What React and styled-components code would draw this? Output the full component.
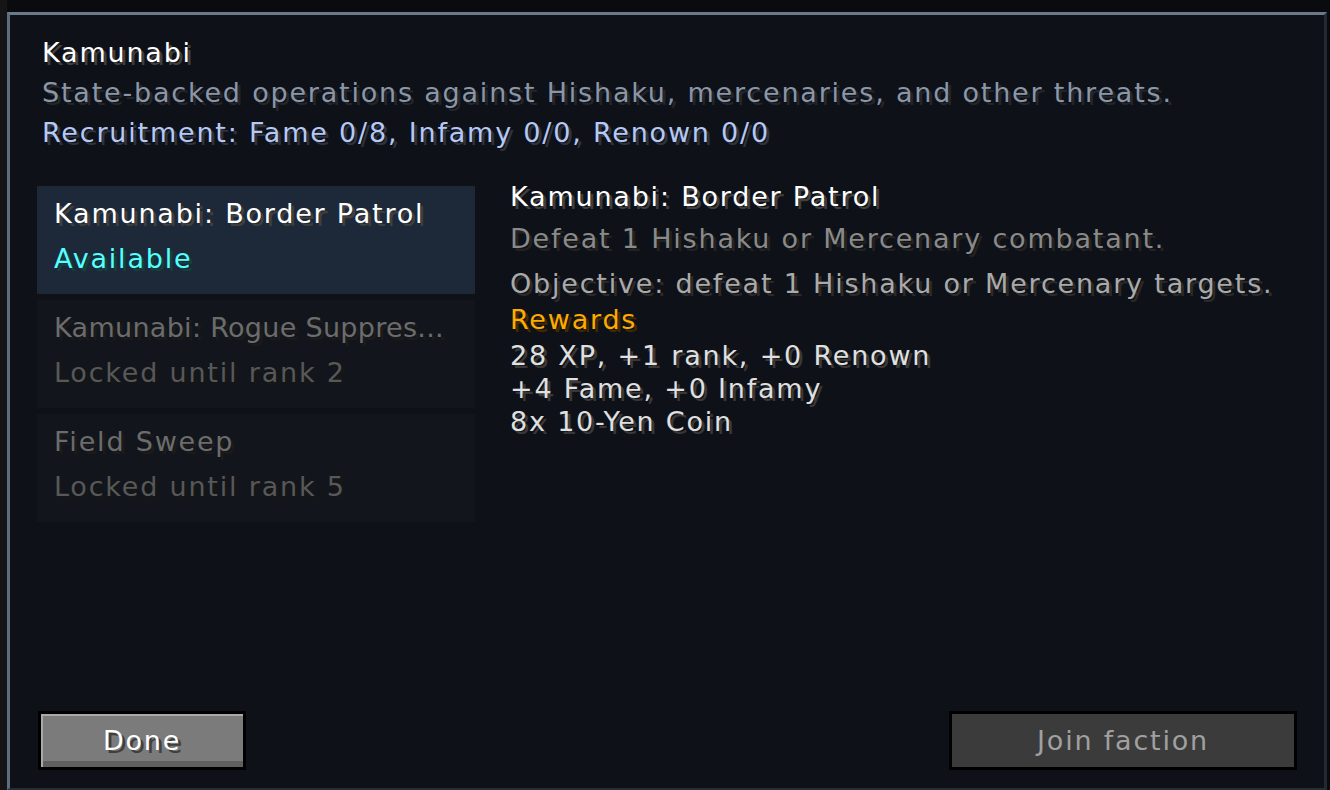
import React from 'react';
import styled, { createGlobalStyle } from 'styled-components';

const GlobalStyle = createGlobalStyle`
  html, body {
    margin: 0;
    background: #0b0c0f;
  }
  body {
    font-family: "DejaVu Sans", "Noto Sans", sans-serif;
  }
`;

// minecraft-style text: flat colour with a hard drop shadow
const Text = styled.div`
  font-size: 27px;
  line-height: 22px;
  letter-spacing: ${(p) => (p.$squeeze ? 0.3 : 1.8)}px;
  white-space: nowrap;
  color: ${(p) => p.$color || '#ffffff'};
  text-shadow: 3px 3px 0 ${(p) => p.$shadow || '#3f3f3f'};
  margin-top: ${(p) => p.$top || 0}px;
`;

const Screen = styled.div`
  width: 1330px;
  height: 790px;
  box-sizing: border-box;
  padding: 12px 3px 0 7px;
  overflow: hidden;
  background: linear-gradient(90deg, #151515 0, #151515 7px, #0a0b0e 7px);
`;

const Panel = styled.section`
  height: 100%;
  box-sizing: border-box;
  display: flex;
  flex-direction: column;
  background: #0e1117;
  border-top: 3px solid #6b7a8b;
  border-left: 3px solid #5d6d7e;
  border-right: 3px solid #222932;
  border-bottom: 2px solid #262d36;
`;

const Header = styled.header`
  padding: 27px 0 0 32px;
  display: flex;
  flex-direction: column;
  gap: 18px;
`;

const Body = styled.div`
  display: flex;
  align-items: flex-start;
  margin-top: 42px;
  padding-left: 27px;
`;

const QuestList = styled.div`
  width: 438px;
  display: flex;
  flex-direction: column;
  gap: 6px;
`;

const QuestItem = styled.div`
  height: 108px;
  box-sizing: border-box;
  padding: 17px 0 0 17px;
  background: ${(p) => (p.$selected ? '#1d2938' : '#12161c')};
  overflow: hidden;
`;

const Detail = styled.div`
  margin-left: 35px;
  display: flex;
  flex-direction: column;
`;

const Footer = styled.footer`
  margin-top: auto;
  display: flex;
  justify-content: space-between;
  align-items: flex-end;
  padding: 0 27px 18px 28px;
`;

const Button = styled.button`
  width: ${(p) => p.$width}px;
  height: 59px;
  box-sizing: border-box;
  border: 3px solid #000;
  padding: 0;
  font-family: "DejaVu Sans", "Noto Sans", sans-serif;
  font-size: 27px;
  letter-spacing: 1.8px;
  cursor: pointer;
  background: ${(p) => (p.disabled ? '#3b3b3b' : '#7b7b7b')};
  color: ${(p) => (p.disabled ? '#a0a0a0' : '#ffffff')};
  text-shadow: ${(p) => (p.disabled ? 'none' : '3px 3px 0 #3f3f3f')};
  box-shadow: ${(p) =>
    p.disabled
      ? 'none'
      : 'inset 2px 2px 0 #a9a9a9, inset 0 -6px 0 #5f5f5f'};
`;

const quests = [
  { title: 'Kamunabi: Border Patrol', status: 'Available', open: true },
  { title: 'Kamunabi: Rogue Suppres...', status: 'Locked until rank 2', long: true },
  { title: 'Field Sweep', status: 'Locked until rank 5' },
];

export default function App() {
  return (
    <>
      <GlobalStyle />
      <Screen>
        <Panel>
          <Header>
            <Text>Kamunabi</Text>
            <Text $color="#8b96a7" $shadow="#22262c">
              State-backed operations against Hishaku, mercenaries, and other threats.
            </Text>
            <Text $color="#b6c9f5" $shadow="#2d323d">
              Recruitment: Fame 0/8, Infamy 0/0, Renown 0/0
            </Text>
          </Header>

          <Body>
            <QuestList>
              {quests.map((q) => (
                <QuestItem key={q.title} $selected={q.open}>
                  <Text
                    $squeeze={q.long}
                    $color={q.open ? '#ffffff' : '#6c6c6c'}
                    $shadow={q.open ? '#3f3f3f' : '#1b1b1b'}
                  >
                    {q.title}
                  </Text>
                  <Text
                    $top={23}
                    $color={q.open ? '#55ffff' : '#585858'}
                    $shadow={q.open ? '#153f3f' : '#161616'}
                  >
                    {q.status}
                  </Text>
                </QuestItem>
              ))}
            </QuestList>

            <Detail>
              <Text>Kamunabi: Border Patrol</Text>
              <Text $top={20} $color="#8a8a8a" $shadow="#222222">
                Defeat 1 Hishaku or Mercenary combatant.
              </Text>
              <Text $top={23} $color="#aaaaaa" $shadow="#2a2a2a">
                Objective: defeat 1 Hishaku or Mercenary targets.
              </Text>
              <Text $top={14} $color="#ffaa00" $shadow="#3f2a00">
                Rewards
              </Text>
              <Text $top={14} $color="#e0e0e0" $shadow="#383838">
                28 XP, +1 rank, +0 Renown
              </Text>
              <Text $top={11} $color="#e0e0e0" $shadow="#383838">
                +4 Fame, +0 Infamy
              </Text>
              <Text $top={11} $color="#e0e0e0" $shadow="#383838">
                8x 10-Yen Coin
              </Text>
            </Detail>
          </Body>

          <Footer>
            <Button $width={208}>Done</Button>
            <Button $width={348} disabled>
              Join faction
            </Button>
          </Footer>
        </Panel>
      </Screen>
    </>
  );
}
